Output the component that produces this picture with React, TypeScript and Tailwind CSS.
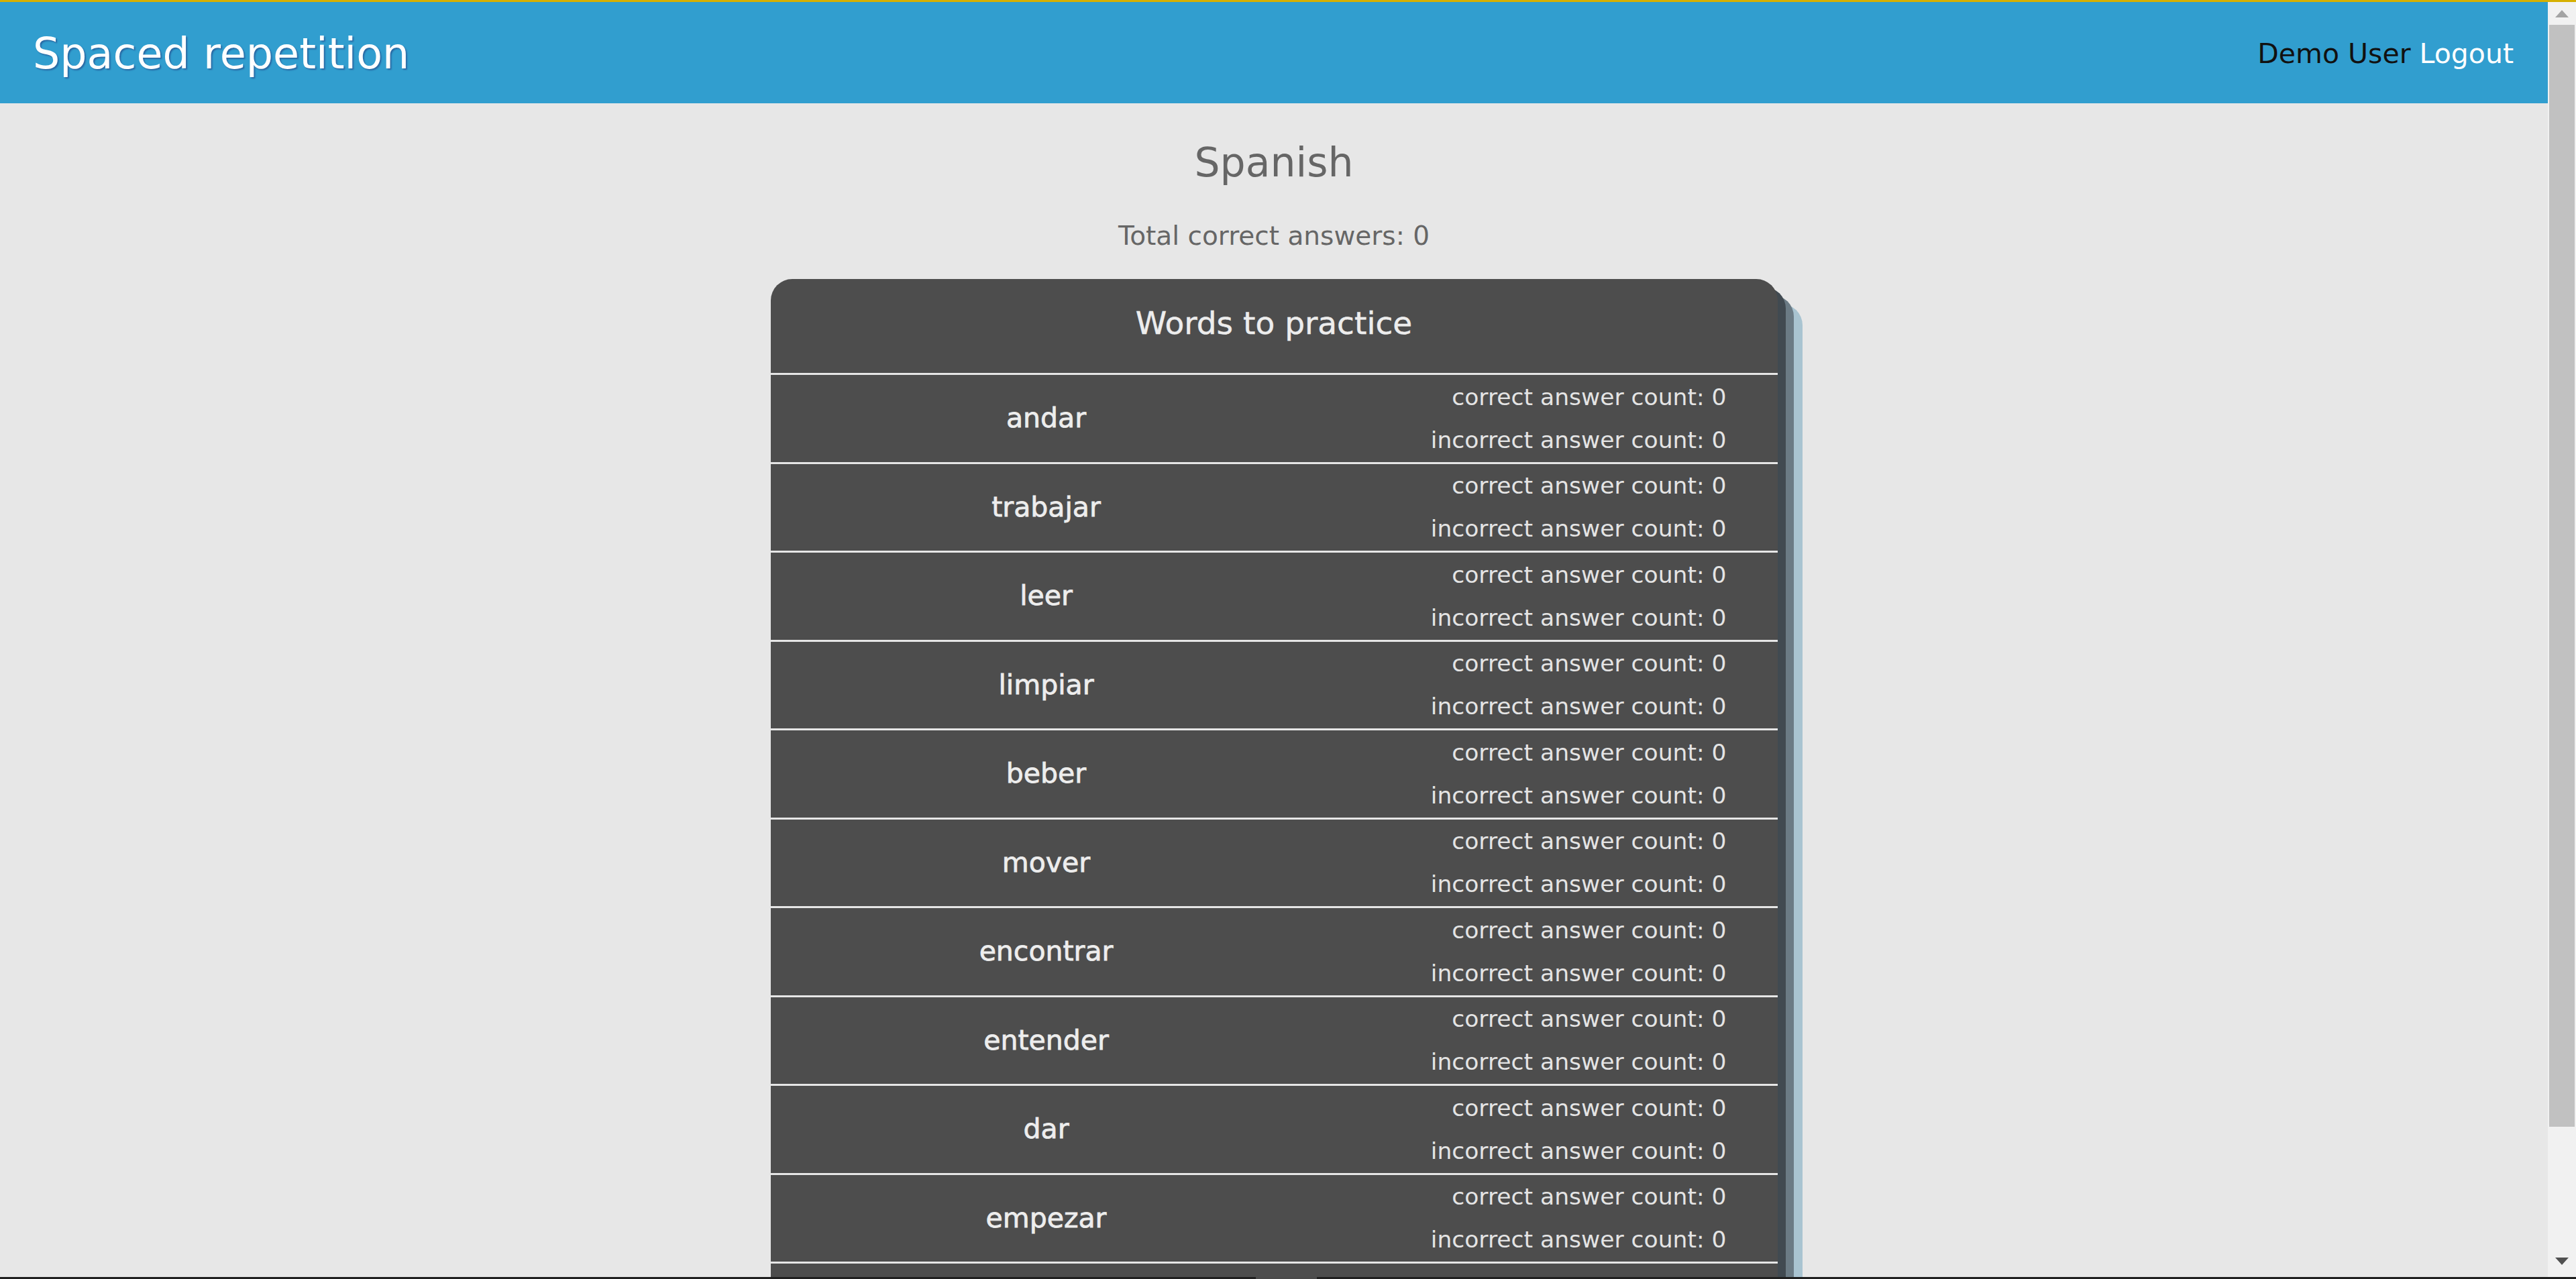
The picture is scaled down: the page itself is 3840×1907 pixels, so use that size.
import React from "react";

const WORDS = [
  "andar",
  "trabajar",
  "leer",
  "limpiar",
  "beber",
  "mover",
  "encontrar",
  "entender",
  "dar",
  "empezar",
];

const font = { fontFamily: '"DejaVu Sans", "Liberation Sans", sans-serif' };

const WordRow: React.FC<{ word: string }> = ({ word }) => (
  <li className="flex h-[132.5px] shrink-0 border-t-[3px] border-[#e6e6e6]">
    <div className="flex w-[822px] items-center justify-center text-[41px] text-[#ededed] [-webkit-text-stroke:0.8px_#ededed]">
      {word}
    </div>
    <div className="flex flex-1 flex-col items-end justify-center pr-[76px] text-[34.5px] leading-[64px] text-[#e4e4e4]">
      <p>correct answer count: 0</p>
      <p>incorrect answer count: 0</p>
    </div>
  </li>
);

// 가짜 스크롤바 (스크린샷에 보이는 브라우저 스크롤바)
const ScrollBar: React.FC = () => (
  <div className="flex w-[42px] shrink-0 flex-col bg-[#f1f1f1]">
    <div className="flex h-[34px] items-center justify-center">
      <svg width="20" height="11" viewBox="0 0 20 11">
        <polygon points="10,0 20,11 0,11" fill="#a3a3a3" />
      </svg>
    </div>
    <div className="mx-[2px] h-[1643px] bg-[#c1c1c1]" />
    <div className="flex-1" />
    <div className="flex h-[40px] items-center justify-center pb-[8px]">
      <svg width="20" height="11" viewBox="0 0 20 11">
        <polygon points="0,0 20,0 10,11" fill="#505050" />
      </svg>
    </div>
  </div>
);

const App: React.FC = () => {
  return (
    <div
      className="flex h-[1907px] w-full flex-col overflow-hidden bg-[#e7e7e7]"
      style={font}
    >
      <div className="h-[3px] shrink-0 bg-[#d6b000]" />

      <div className="flex min-h-0 flex-1">
        <main className="flex min-w-0 flex-1 flex-col overflow-hidden">
          {/* 헤더 */}
          <header className="flex h-[151px] shrink-0 items-center justify-between bg-[#319ecf] pl-[49px] pr-[51px] pt-[4px]">
            <h1 className="text-[63.5px] text-white [text-shadow:2px_2px_2px_rgba(30,40,110,0.45)]">
              Spaced repetition
            </h1>
            <div className="text-[41px]">
              <span className="text-[#111111]">Demo User</span>{" "}
              <button className="text-white">Logout</button>
            </div>
          </header>

          {/* 본문 */}
          <section className="flex flex-col items-center">
            <h2 className="mt-[52px] text-[60px] leading-[72px] text-[#666666]">
              Spanish
            </h2>
            <p className="mt-[45px] text-[39px] leading-[58px] text-[#666666]">
              Total correct answers: 0
            </p>

            <div className="mt-[35px] w-[1501px] rounded-[32px] bg-[#4d4d4d] shadow-[12px_12px_0_#414a51,24px_24px_0_#6b7b85,37px_37px_0_#a9c4d1]">
              <div className="flex h-[140px] items-center justify-center pb-[8px] text-[47px] text-[#ededed] [-webkit-text-stroke:0.5px_#ededed]">
                Words to practice
              </div>
              <ul className="flex flex-col">
                {WORDS.map((w) => (
                  <WordRow key={w} word={w} />
                ))}
                {/* 화면 아래로 잘린 다음 행 */}
                <li className="h-[132.5px] shrink-0 border-t-[3px] border-[#e6e6e6]" />
              </ul>
            </div>
          </section>
        </main>

        <ScrollBar />
      </div>

      <div className="flex h-[3px] shrink-0 bg-[#1f1f1f]">
        <div className="w-[1872px]" />
        <div className="w-[91px] bg-[#4a4a4a]" />
      </div>
    </div>
  );
};

export default App;
